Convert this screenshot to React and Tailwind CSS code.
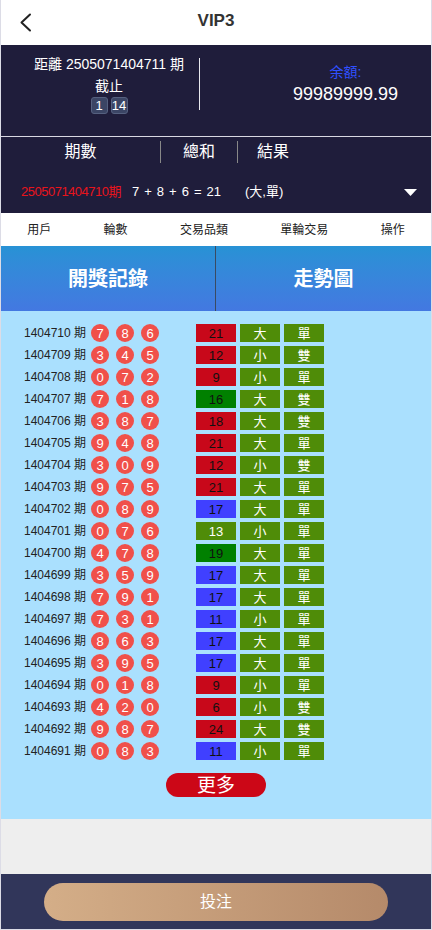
import React from "react";

const rows = [
  ["1404710", [7, 8, 6], 21, "r", "大", "單"],
  ["1404709", [3, 4, 5], 12, "r", "小", "雙"],
  ["1404708", [0, 7, 2], 9, "r", "小", "單"],
  ["1404707", [7, 1, 8], 16, "g", "大", "雙"],
  ["1404706", [3, 8, 7], 18, "r", "大", "雙"],
  ["1404705", [9, 4, 8], 21, "r", "大", "單"],
  ["1404704", [3, 0, 9], 12, "r", "小", "雙"],
  ["1404703", [9, 7, 5], 21, "r", "大", "單"],
  ["1404702", [0, 8, 9], 17, "b", "大", "單"],
  ["1404701", [0, 7, 6], 13, "o", "小", "單"],
  ["1404700", [4, 7, 8], 19, "g", "大", "單"],
  ["1404699", [3, 5, 9], 17, "b", "大", "單"],
  ["1404698", [7, 9, 1], 17, "b", "大", "單"],
  ["1404697", [7, 3, 1], 11, "b", "小", "單"],
  ["1404696", [8, 6, 3], 17, "b", "大", "單"],
  ["1404695", [3, 9, 5], 17, "b", "大", "單"],
  ["1404694", [0, 1, 8], 9, "r", "小", "單"],
  ["1404693", [4, 2, 0], 6, "r", "小", "雙"],
  ["1404692", [9, 8, 7], 24, "r", "大", "雙"],
  ["1404691", [0, 8, 3], 11, "b", "小", "單"],
];

const sumCls = {
  r: "bg-[#c8081a] text-[#111]",
  g: "bg-[#008000] text-[#111]",
  b: "bg-[#4040ff] text-[#111]",
  o: "bg-[#4f8c08] text-white",
};

export default function App() {
  return (
    <div
      className="w-[432px] h-[930px] flex flex-col border-x border-b border-[#dcdce6] overflow-hidden"
      style={{ fontFamily: '"Liberation Sans", Arial, "Noto Sans CJK TC", sans-serif' }}
    >
      {/* Header */}
      <div className="h-[45px] shrink-0 bg-white flex items-center relative">
        <svg className="ml-[18px]" width="13" height="19" viewBox="0 0 13 19" fill="none">
          <polyline points="11,1.5 2.5,9.5 11,17.5" stroke="#222" strokeWidth="2" strokeLinecap="round" strokeLinejoin="round" />
        </svg>
        <div className="absolute left-0 right-0 top-0 h-[45px] flex items-center justify-center pointer-events-none">
          <span className="text-[17px] font-bold text-[#333] pb-[3px]">VIP3</span>
        </div>
      </div>

      {/* Dark section 1 */}
      <div className="h-[91px] shrink-0 bg-[#1f1d3b] flex">
        <div className="w-[198px] pl-[18px] pt-[8px] flex flex-col items-center text-white text-[14px] leading-[22px]">
          <div>距離 2505071404711 期</div>
          <div>截止</div>
          <div className="flex gap-[3px] mt-[0px]">
            <span className="w-[17px] h-[17px] flex items-center justify-center rounded-[3px] bg-[#3b4565] border border-[#55607f] text-[13px] leading-none">1</span>
            <span className="w-[17px] h-[17px] flex items-center justify-center rounded-[3px] bg-[#3b4565] border border-[#55607f] text-[13px] leading-none">14</span>
          </div>
        </div>
        <div className="w-px h-[52px] mt-[13px] bg-[#e8e8ee]"></div>
        <div className="flex-1 pl-[60px] pt-[17px] flex flex-col items-center">
          <div className="text-[14px] leading-[20px] text-[#3050ff]">余額:</div>
          <div className="text-[18px] leading-[24px] text-white">99989999.99</div>
        </div>
      </div>
      <div className="h-px shrink-0 bg-[#d8d8e2]"></div>

      {/* Dark section 2 */}
      <div className="h-[76px] shrink-0 bg-[#1f1d3b] pt-[4px] text-white">
        <div className="h-[22px] flex items-center text-[16px]">
          <div className="w-[159px] text-center">期數</div>
          <div className="w-px h-[22px] bg-[#888]"></div>
          <div className="w-[76px] text-center">總和</div>
          <div className="w-px h-[22px] bg-[#888]"></div>
          <div className="pl-[19px]">結果</div>
        </div>
        <div className="h-[20px] mt-[19px] flex items-center text-[13px]">
          <span className="ml-[20px] text-[#e8141c] tracking-[-0.5px]">2505071404710期</span>
          <span className="ml-[11px] flex gap-[5px]">
            <span>7</span><span>+</span><span>8</span><span>+</span><span>6</span><span>=</span><span>21</span>
          </span>
          <span className="ml-[24px]">(大,單)</span>
          <svg className="ml-auto mr-[14px]" width="13" height="7" viewBox="0 0 13 7">
            <polygon points="0,0 13,0 6.5,7" fill="white" />
          </svg>
        </div>
      </div>

      {/* Labels */}
      <div className="h-[33px] shrink-0 bg-white flex items-center justify-around text-[12px] text-[#222]">
        <span>用戶</span>
        <span>輪數</span>
        <span>交易品類</span>
        <span>單輪交易</span>
        <span>操作</span>
      </div>

      {/* Tabs */}
      <div className="h-[65px] shrink-0 flex bg-gradient-to-b from-[#2792d5] to-[#4378e1]">
        <div className="w-[214px] flex items-center justify-center text-white text-[20px] font-bold">開獎記錄</div>
        <div className="w-px bg-[#3a4a62]"></div>
        <div className="flex-1 flex items-center justify-center text-white text-[20px] font-bold">走勢圖</div>
      </div>

      {/* Records */}
      <div className="h-[508px] shrink-0 bg-[#aae0fe] pt-[11px] flex flex-col">
        {rows.map(([id, balls, sum, c, bs, oe]) => (
          <div key={id} className="h-[22px] flex items-center pl-[23px]">
            <span className="w-[67px] text-[12px] text-[#222] whitespace-nowrap">{id} 期</span>
            <div className="flex gap-[7px]">
              {balls.map((b, i) => (
                <span key={i} className="w-[18px] h-[18px] rounded-full bg-[#f0504a] text-white text-[13px] flex items-center justify-center leading-none">
                  {b}
                </span>
              ))}
            </div>
            <div className="ml-[37px] flex gap-[4px] text-[13px]">
              <span className={`w-[40px] h-[18px] flex items-center justify-center leading-none ${sumCls[c]}`}>{sum}</span>
              <span className="w-[40px] h-[18px] flex items-center justify-center leading-none bg-[#4f8c08] text-white">{bs}</span>
              <span className="w-[40px] h-[18px] flex items-center justify-center leading-none bg-[#4f8c08] text-white">{oe}</span>
            </div>
          </div>
        ))}
        <div className="mt-[11px] flex justify-center">
          <div className="w-[100px] h-[24px] rounded-full bg-[#cc0717] text-white text-[19px] flex items-center justify-center leading-none">更多</div>
        </div>
      </div>

      {/* Gray */}
      <div className="h-[55px] shrink-0 bg-[#eeeeee]"></div>

      {/* Footer */}
      <div className="flex-1 bg-[#31365a] flex items-center justify-center">
        <div className="w-[344px] h-[38px] rounded-full bg-gradient-to-r from-[#d4ae88] to-[#b58a6a] text-white text-[16px] flex items-center justify-center">投注</div>
      </div>
    </div>
  );
}
